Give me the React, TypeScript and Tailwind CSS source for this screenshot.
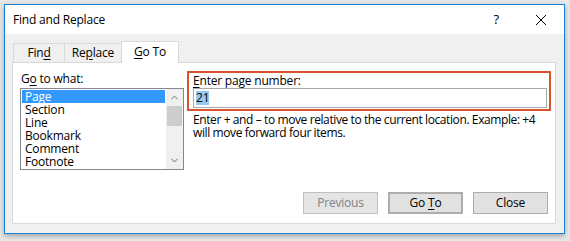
import { ChevronUp, ChevronDown } from 'lucide-react'

const items = ['Page', 'Section', 'Line', 'Bookmark', 'Comment', 'Footnote']

function Tab({ label, width, selected }: { label: [string, string, string]; width: string; selected?: boolean }) {
  const [a, b, c] = label
  return (
    <div
      className={[
        'border border-b-0 border-[#d9d9d9] text-center text-[12px] leading-[16px]',
        width,
        selected ? 'relative z-10 -mb-px h-[22px] bg-white pt-[2px]' : 'h-[19px] -mr-px pt-[1px]',
      ].join(' ')}
    >
      {a}
      <span className="underline underline-offset-2">{b}</span>
      {c}
    </div>
  )
}

function Button({ children, primary, disabled }: { children: React.ReactNode; primary?: boolean; disabled?: boolean }) {
  return (
    <div
      className={[
        'flex h-[22px] w-[75px] items-center justify-center text-[12px]',
        primary ? 'border-2 border-[#0078d7]' : 'border',
        disabled ? 'border-[#bfbfbf] bg-[#e5e5e5] text-[#838383]' : 'border-[#adadad] bg-[#e1e1e1] text-black',
        primary ? 'border-[#0078d7]' : '',
      ].join(' ')}
    >
      <span>{children}</span>
    </div>
  )
}

export default function App() {
  return (
    <div
      className="h-[241px] w-[570px] overflow-hidden bg-[#e8e8e8] pl-[4px] pt-[4px] tracking-[-0.2px] text-black"
      style={{ fontFamily: '"Segoe UI", "Open Sans", "Noto Sans", sans-serif' }}
    >
      <div className="flex h-[230px] w-[561px] flex-col border border-[#1883d7] bg-[#f0f0f0] shadow-[0_2px_5px_rgba(0,0,0,0.3)]">
        {/* Title bar */}
        <div className="flex h-[29px] shrink-0 items-center bg-white pl-[8px] text-[12px]">
          <span>Find and Replace</span>
          <span className="ml-auto mr-[36px] text-[13px]">?</span>
          <svg width="12" height="12" viewBox="0 0 12 12" className="mr-[17px]">
            <path d="M1 1 L11 11 M11 1 L1 11" stroke="#000" strokeWidth="1" />
          </svg>
        </div>

        {/* Tabs */}
        <div className="mt-[7px] flex items-end pl-[8px]">
          <Tab label={['Fin', 'd', '']} width="w-[52px]" />
          <Tab label={['Re', 'p', 'lace']} width="w-[58px]" />
          <Tab label={['', 'G', 'o To']} width="w-[58px]" selected />
        </div>

        {/* Panel */}
        <div className="ml-[7px] flex h-[162px] w-[544px] flex-col border border-[#d9d9d9] bg-white">
          <div className="flex pl-[7px] pt-[8px]">
            {/* Go to what */}
            <div className="w-[164px]">
              <div className="h-[17px] pl-[1px] text-[12px] leading-[16px]">
                G<span className="underline underline-offset-2">o</span> to what:
              </div>
              <div className="flex h-[82px] border border-[#828790] bg-white">
                <div className="flex-1 p-px">
                  {items.map((it, i) => (
                    <div
                      key={it}
                      className={
                        i === 0
                          ? 'h-[13px] bg-[#3399ff] pl-[3px] text-[12px] leading-[13px] text-white'
                          : 'h-[13px] pl-[3px] text-[12px] leading-[13px]'
                      }
                    >
                      {it}
                    </div>
                  ))}
                </div>
                <div className="flex w-[17px] flex-col bg-[#f0f0f0]">
                  <div className="flex h-[17px] items-center justify-center">
                    <ChevronUp size={11} strokeWidth={2} color="#606060" />
                  </div>
                  <div className="mx-px h-[20px] bg-[#cdcdcd]" />
                  <div className="mt-auto flex h-[17px] items-center justify-center">
                    <ChevronDown size={11} strokeWidth={2} color="#606060" />
                  </div>
                </div>
              </div>
            </div>

            {/* Page number */}
            <div className="ml-[3px] flex flex-col">
              <div className="h-[40px] w-[364px] border-2 border-[#d9532c] px-[4px]">
                <div className="h-[15px] text-[12px] leading-[15px]">
                  <span className="underline underline-offset-2">E</span>nter page number:
                </div>
                <div className="flex h-[20px] w-[354px] items-center border border-[#a9a9a9] bg-white pl-[2px] text-[12px]">
                  <span className="bg-[#99c9ef] leading-[14px]">21</span>
                </div>
              </div>
              <div className="mt-[2px] whitespace-nowrap pl-[6px] text-[12px] leading-[13px] tracking-[-0.4px]">
                Enter + and – to move relative to the current location. Example: +4
                <br />
                will move forward four items.
              </div>
            </div>
          </div>

          {/* Buttons */}
          <div className="mt-auto flex justify-end gap-[10px] pb-[9px] pr-[7px]">
            <Button disabled>Previous</Button>
            <Button primary>
              Go <span className="underline underline-offset-2">T</span>o
            </Button>
            <Button>Close</Button>
          </div>
        </div>
      </div>
    </div>
  )
}
